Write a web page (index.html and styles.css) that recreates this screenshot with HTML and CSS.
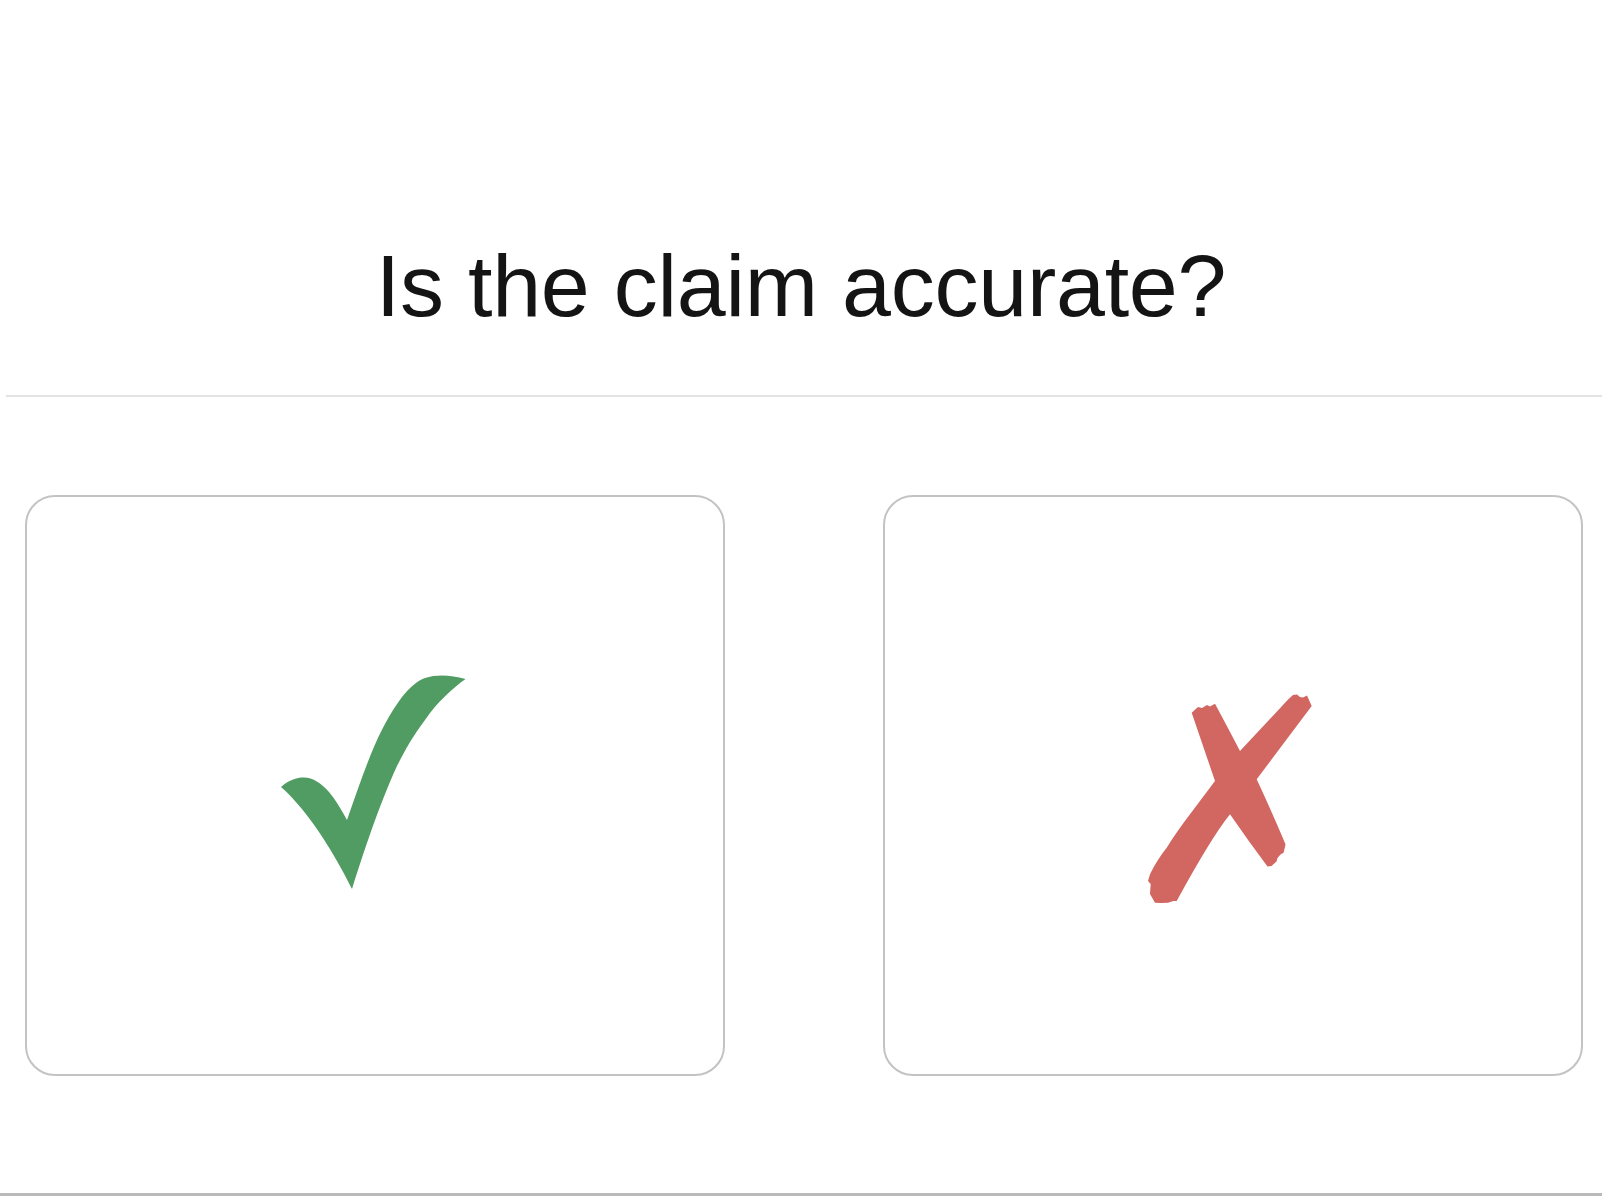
FILE: index.html
```html
<!DOCTYPE html>
<html lang="en">
<head>
<meta charset="utf-8">
<title>Is the claim accurate?</title>
<link rel="stylesheet" href="styles.css">
</head>
<body>
<header class="question">
  <h1 class="question-title">Is the claim accurate?</h1>
</header>
<div class="divider"></div>
<main class="choices">
  <button class="choice" type="button" aria-label="Accurate">
    <svg class="choice-icon" width="220" height="250" viewBox="0 -5 220 250" aria-hidden="true">
      <path fill="#509c62" d="M16,121 C24,114 31,111.5 39,111.5 C48,111.5 56,117 64,126 C70,133 76,143 82,154 C90,131 98,108 106,88 C115,66 125,47 137,31 C145,21 152,15 160,12 C172,8 186,9 200.5,13 C188,22 172,36 160,54 C148,70 140,84 132,100 C118,130 102,175 87,223 C77,203 67,186 58,172 C45,152 30,133 16,121 Z"/>
    </svg>
  </button>
  <button class="choice" type="button" aria-label="Not accurate">
    <svg class="choice-icon" width="220" height="250" viewBox="0 -5 220 250" aria-hidden="true">
      <path fill="#d26661" d="M68.7,46.7 L75,41 L79,42 L84,39 L87,40.5 L92,37.7 Q104,60 117,85 L165.3,33.3 L170,29 L174,28.5 L177,31 L180,31.5 L184,29.5 L188.7,40 L133.7,113.3 Q148,144 162.5,178.3 L161.5,183 L160.5,186.7 L157.5,188.5 L154.5,192 L153.5,195.5 L148.5,200 L144.5,200.5 Q126,176 107,148.3 Q88,172 53.7,235 L50.3,235 L45,236.7 L38,237 L32,236.7 L27,228 L27.7,218 L25,215 L27,208.3 C33,196 38,189 43.7,181.7 C51,170 59,159 67,148.3 L92,115 Z"/>
    </svg>
  </button>
</main>
<div class="footer-bar"></div>
</body>
</html>
```
FILE: styles.css
```css
html, body {
  margin: 0;
  padding: 0;
  background: #ffffff;
}

body {
  font-family: "Liberation Sans", Arial, sans-serif;
  color: #141414;
}

.question {
  padding-top: 236px;
  text-align: center;
}

.question-title {
  margin: 0;
  font-size: 88px;
  font-weight: 400;
  line-height: 100px;
  letter-spacing: -0.25px;
}

.divider {
  margin: 59px 0 0 6px;
  height: 2px;
  background: #e3e3e3;
}

.choices {
  display: grid;
  grid-template-columns: 700px 700px;
  column-gap: 158px;
  padding: 0 0 0 25px;
  margin-top: 98px;
}

.choice {
  box-sizing: border-box;
  height: 581px;
  margin: 0;
  padding: 0;
  background: #ffffff;
  border: 2px solid #c3c3c3;
  border-radius: 30px;
  display: flex;
  align-items: center;
  justify-content: center;
  cursor: pointer;
}

.choice-icon {
  display: block;
}

.footer-bar {
  margin-top: 117px;
  height: 3px;
  background: #bababa;
}
```
